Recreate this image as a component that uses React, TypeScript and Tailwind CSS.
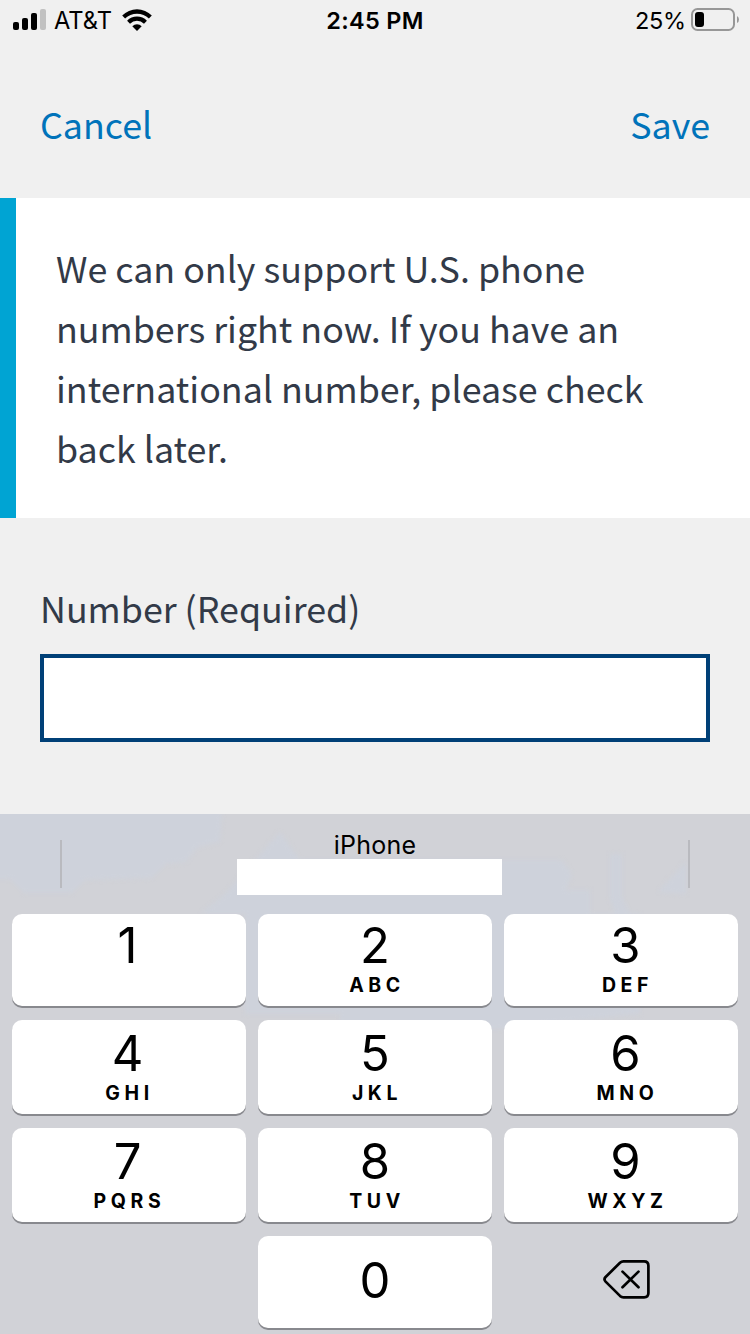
import React from "react";

type KeyDef = { digit: string; letters?: string };

const ROWS: { height: string; top: string; keys: KeyDef[] }[] = [
  {
    height: "h-[92px] mb-[14px]",
    top: "pt-[7px]",
    keys: [{ digit: "1" }, { digit: "2", letters: "ABC" }, { digit: "3", letters: "DEF" }],
  },
  {
    height: "h-[94px] mb-[14px]",
    top: "pt-[9px]",
    keys: [{ digit: "4", letters: "GHI" }, { digit: "5", letters: "JKL" }, { digit: "6", letters: "MNO" }],
  },
  {
    height: "h-[94px] mb-[14px]",
    top: "pt-[9px]",
    keys: [{ digit: "7", letters: "PQRS" }, { digit: "8", letters: "TUV" }, { digit: "9", letters: "WXYZ" }],
  },
];

const COLUMN_SHIFT = ["pr-[3px]", "", "pl-[9px]"];
const KEY = "flex flex-col items-center rounded-[10px] bg-white shadow-[0_2px_0_#88898e]";
const DIGIT = "block h-[50px] text-[49px] leading-[50px]";
const LETTERS = "block h-[28px] pl-[4px] text-[19.5px] font-bold leading-[28px] tracking-[4.6px]";
const BODY = "font-['Noto_Sans_CJK_SC',sans-serif] text-[35.8px]";

function StatusBar() {
  return (
    <div className="grid h-[40px] grid-cols-3 items-center text-black">
      <div className="flex items-center pl-[13px]">
        <svg width="34" height="22" viewBox="0 0 34 22" className="shrink-0">
          <rect x="0" y="13" width="6" height="8" rx="2" />
          <rect x="9" y="9" width="6" height="12" rx="2" />
          <rect x="18" y="4" width="6" height="17" rx="2" />
          <rect x="27" y="0" width="6" height="21" rx="2" fill="#c1c1c1" />
        </svg>
        <span className="ml-[7px] pt-[2px] text-[23.7px] leading-[36px]">AT&amp;T</span>
        <svg width="30" height="22" viewBox="0 0 30 22" className="ml-[10px] shrink-0">
          <path d="M0.2 6.6 A20.6 20.6 0 0 1 29.8 6.6 L26.9 9.6 A16.8 16.8 0 0 0 3.1 9.6 Z" />
          <path d="M5.1 11.7 A13.8 13.8 0 0 1 24.9 11.7 L22 14.7 A10 10 0 0 0 8 14.7 Z" />
          <path d="M10.3 17.2 A6.8 6.8 0 0 1 19.7 17.2 L15 22 Z" />
        </svg>
      </div>
      <div className="pt-[2px] text-center text-[23.5px] font-semibold leading-[36px] tracking-[0.3px]">2:45 PM</div>
      <div className="flex items-center justify-end pr-[11px]">
        <span className="pt-[2px] text-[23.5px] leading-[36px] tracking-[-0.2px]">25%</span>
        <svg width="48" height="24" viewBox="0 0 48 24" className="ml-[5px] shrink-0">
          <rect x="1" y="1" width="42" height="21" rx="5.5" fill="none" stroke="#979797" strokeWidth="2" />
          <rect x="4" y="4" width="9" height="15" rx="3" />
          <path d="M46 8 Q48 9 48 11.5 Q48 14 46 15 Z" fill="#979797" />
        </svg>
      </div>
    </div>
  );
}

function KeyboardTint() {
  return (
    <svg className="absolute left-0 top-0" width="750" height="230" viewBox="0 0 750 230">
      <g fill="#ced2db" className="blur-[2px]">
        <path d="M-5 -5H222L220 28L198 33L186 48L166 50L152 64L85 66L72 79H24L10 65H-5Z" />
        <path d="M255 46L280 18L300 46H562L572 60L566 76H590V100H640V200L500 215H340V200H245V100H200L225 80Z" />
        <path d="M610 40H622V84L635 110H618L610 84Z" />
        <path d="M658 78L686 48V80Z" />
      </g>
    </svg>
  );
}

function Keyboard() {
  return (
    <div className="relative h-[520px] overflow-hidden bg-[#d1d2d7] text-black">
      <KeyboardTint />
      <div className="relative flex h-[100px] justify-between px-[60px] pt-[26px]">
        <div className="h-[48px] w-[2px] bg-[#b9babf]" />
        <div className="-mt-[9px] ml-[-11px] flex w-[265px] flex-col">
          <span className="h-[28px] pl-[11px] text-center text-[25px] leading-[28px] tracking-[0.2px]">iPhone</span>
          <div className="h-[36px] bg-white" />
        </div>
        <div className="h-[48px] w-[2px] bg-[#b9babf]" />
      </div>
      <div className="relative px-[12px]">
        {ROWS.map((row) => (
          <div key={row.keys[0].digit} className={`grid grid-cols-3 gap-[12px] ${row.height}`}>
            {row.keys.map((k, column) => (
              <div key={k.digit} className={`${KEY} ${row.top} ${COLUMN_SHIFT[column]}`}>
                <span className={DIGIT}>{k.digit}</span>
                {k.letters && <span className={LETTERS}>{k.letters}</span>}
              </div>
            ))}
          </div>
        ))}
        <div className="grid h-[92px] grid-cols-3 gap-[12px]">
          <div />
          <div className={`${KEY} pt-[20px]`}>
            <span className={DIGIT}>0</span>
          </div>
          <div className="flex items-start justify-center pl-[11px] pt-[23px]">
            <svg width="48" height="41" viewBox="0 0 48 41" fill="none" stroke="#000" strokeWidth="2.7" strokeLinecap="round" strokeLinejoin="round">
              <path d="M20.5 2.4H41.1Q45.4 2.4 45.4 6.7V34Q45.4 38.3 41.1 38.3H20.5Q18.5 38.3 17 36.9L2.6 22.6Q0.4 20.3 2.6 18L17 3.8Q18.5 2.4 20.5 2.4Z" />
              <path d="M19.5 12.6L35.5 28.2M35.5 12.6L19.5 28.2" />
            </svg>
          </div>
        </div>
      </div>
    </div>
  );
}

export default function App() {
  return (
    <div className="flex h-[1334px] w-[750px] flex-col overflow-hidden bg-[#f0f0f0] font-['Inter',sans-serif]">
      <StatusBar />
      <div className={`flex h-[158px] items-start justify-between px-[40px] pt-[53px] leading-[60px] text-[#0073ba] ${BODY}`}>
        <button type="button">Cancel</button>
        <button type="button">Save</button>
      </div>
      <div className={`h-[320px] whitespace-nowrap border-l-[16px] border-[#00a4d3] bg-white pl-[40px] pt-[39px] leading-[60px] text-[#323a48] ${BODY}`}>
        <p>We can only support U.S. phone</p>
        <p>numbers right now. If you have an</p>
        <p>international number, please check</p>
        <p>back later.</p>
      </div>
      <div className="h-[296px] px-[40px] pt-[59px]">
        <label htmlFor="number" className={`block h-[77px] leading-[60px] text-[#323a48] ${BODY}`}>
          Number (Required)
        </label>
        <input id="number" type="tel" className="block h-[88px] w-full border-4 border-[#004077] bg-white px-4 outline-none" />
      </div>
      <Keyboard />
    </div>
  );
}
